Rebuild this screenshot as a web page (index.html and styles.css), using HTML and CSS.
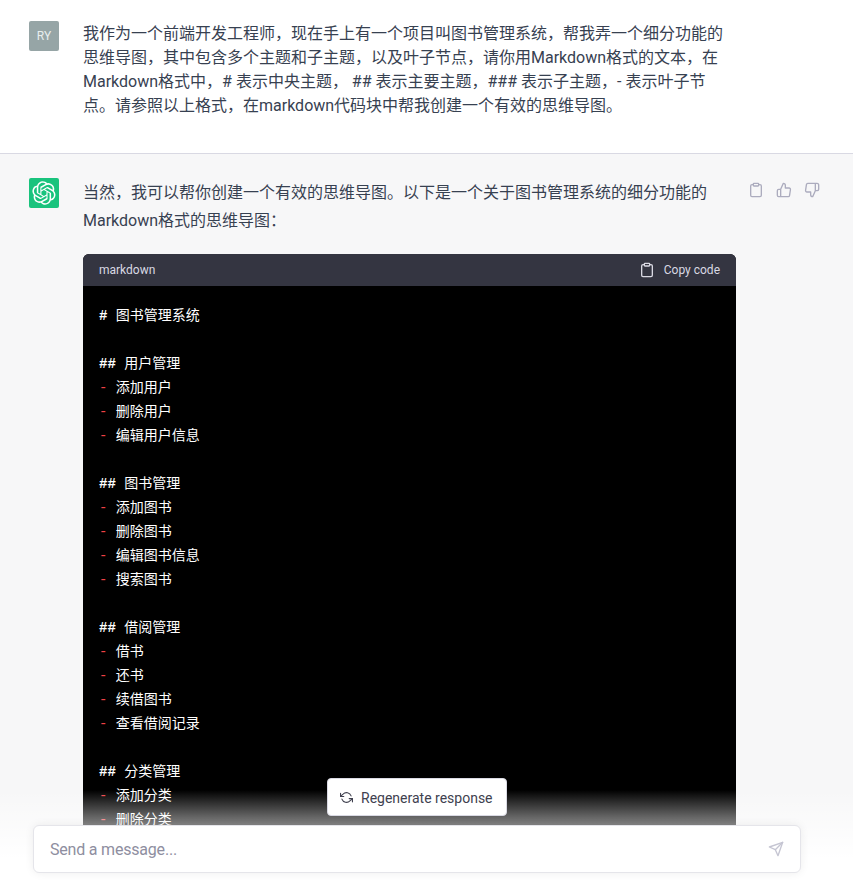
FILE: index.html
```html
<!DOCTYPE html>
<html lang="zh-CN">
<head>
<meta charset="utf-8">
<title>ChatGPT</title>
<link rel="stylesheet" href="styles.css">
</head>
<body>
<main class="thread">
  <section class="row row-user">
    <div class="avatar avatar-user">RY</div>
    <div class="content">
      <p class="msg">我作为一个前端开发工程师，现在手上有一个项目叫图书管理系统，帮我弄一个细分功能的思维导图，其中包含多个主题和子主题，以及叶子节点，请你用Markdown格式的文本，在Markdown格式中，# 表示中央主题， ## 表示主要主题，### 表示子主题，- 表示叶子节点。请参照以上格式，在markdown代码块中帮我创建一个有效的思维导图。</p>
    </div>
  </section>
  <section class="row row-bot">
    <div class="avatar avatar-bot">
      <svg class="logo" viewBox="0 0 41 41" fill="none"><path fill="currentColor" d="M37.5324 16.8707C37.9808 15.5241 38.1363 14.0974 37.9886 12.6859C37.8409 11.2744 37.3934 9.91076 36.676 8.68622C35.6126 6.83404 33.9882 5.3676 32.0373 4.4985C30.0864 3.62941 27.9098 3.40259 25.8215 3.85078C24.8796 2.7893 23.7219 1.94125 22.4257 1.36341C21.1295 0.785575 19.7249 0.491269 18.3058 0.500197C16.1708 0.495044 14.0893 1.16803 12.3614 2.42214C10.6335 3.67624 9.34853 5.44666 8.6917 7.47815C7.30085 7.76286 5.98686 8.3414 4.8377 9.17505C3.68854 10.0087 2.73073 11.0782 2.02839 12.312C0.956464 14.1591 0.498905 16.2988 0.721698 18.4228C0.944492 20.5467 1.83612 22.5449 3.268 24.1293C2.81966 25.4759 2.66413 26.9026 2.81182 28.3141C2.95951 29.7256 3.40701 31.0892 4.12437 32.3138C5.18791 34.1659 6.8123 35.6322 8.76321 36.5013C10.7141 37.3704 12.8907 37.5973 14.9789 37.1492C15.9208 38.2107 17.0786 39.0587 18.3747 39.6366C19.6709 40.2144 21.0755 40.5087 22.4946 40.4998C24.6307 40.5054 26.7133 39.8321 28.4418 38.5772C30.1704 37.3223 31.4556 35.5506 32.1119 33.5179C33.5027 33.2332 34.8167 32.6547 35.9659 31.821C37.115 30.9874 38.0728 29.9178 38.7752 28.684C39.8458 26.8371 40.3023 24.6979 40.0789 22.5748C39.8556 20.4517 38.9639 18.4544 37.5324 16.8707ZM22.4978 37.8849C20.7443 37.8874 19.0459 37.2733 17.6994 36.1501C17.7601 36.117 17.8666 36.0586 17.936 36.0161L25.9004 31.4156C26.1003 31.3019 26.2663 31.137 26.3813 30.9378C26.4964 30.7386 26.5563 30.5124 26.5549 30.2825V19.0542L29.9213 20.998C29.9389 21.0068 29.9541 21.0198 29.9656 21.0359C29.977 21.052 29.9842 21.0707 29.9867 21.0902V30.3889C29.9842 32.375 29.1946 34.2791 27.7909 35.6841C26.3872 37.0892 24.4838 37.8806 22.4978 37.8849ZM6.39227 31.0064C5.51397 29.4888 5.19742 27.7107 5.49804 25.9832C5.55718 26.0187 5.66048 26.0818 5.73461 26.1244L13.699 30.7248C13.8975 30.8408 14.1233 30.902 14.3532 30.902C14.583 30.902 14.8088 30.8408 15.0073 30.7248L24.731 25.1103V28.9979C24.7321 29.0177 24.7283 29.0376 24.7199 29.0556C24.7115 29.0736 24.6988 29.0893 24.6829 29.1012L16.6317 33.7497C14.9096 34.7416 12.8643 35.0097 10.9447 34.4954C9.02506 33.9811 7.38785 32.7263 6.39227 31.0064ZM4.29707 13.6194C5.17156 12.0998 6.55279 10.9364 8.19885 10.3327C8.19885 10.4013 8.19491 10.5228 8.19491 10.6071V19.808C8.19351 20.0378 8.25334 20.2638 8.36823 20.4629C8.48312 20.6619 8.64893 20.8267 8.84863 20.9404L18.5723 26.5542L15.206 28.4979C15.1894 28.5089 15.1703 28.5155 15.1505 28.5173C15.1307 28.5191 15.1107 28.516 15.0924 28.5082L7.04046 23.8557C5.32135 22.8601 4.06716 21.2235 3.55289 19.3046C3.03862 17.3858 3.30624 15.3413 4.29707 13.6194ZM31.955 20.0556L22.2312 14.4411L25.5976 12.4981C25.6142 12.4872 25.6333 12.4805 25.6531 12.4787C25.6729 12.4769 25.6928 12.4801 25.7111 12.4879L33.7631 17.1364C34.9967 17.849 36.0017 18.8982 36.6606 20.1613C37.3194 21.4244 37.6047 22.849 37.4832 24.2684C37.3617 25.6878 36.8382 27.0432 35.9743 28.1759C35.1103 29.3086 33.9415 30.1717 32.6047 30.6641C32.6047 30.5947 32.6047 30.4733 32.6047 30.3889V21.188C32.6066 20.9586 32.5474 20.7328 32.4332 20.5338C32.319 20.3348 32.154 20.1698 31.955 20.0556ZM35.3055 15.0128C35.2464 14.9765 35.1431 14.9142 35.069 14.8717L27.1045 10.2712C26.906 10.1554 26.6803 10.0943 26.4504 10.0943C26.2206 10.0943 25.9948 10.1554 25.7963 10.2712L16.0726 15.8858V11.9982C16.0715 11.9783 16.0753 11.9585 16.0837 11.9405C16.0921 11.9225 16.1048 11.9068 16.1207 11.8949L24.1719 7.25025C25.4053 6.53903 26.8158 6.19376 28.2383 6.25482C29.6608 6.31589 31.0364 6.78077 32.2044 7.59508C33.3723 8.40939 34.2842 9.53945 34.8334 10.8531C35.3826 12.1667 35.5464 13.6095 35.3055 15.0128ZM14.2424 21.9419L10.8752 19.9981C10.8576 19.9893 10.8423 19.9763 10.8309 19.9602C10.8195 19.9441 10.8122 19.9254 10.8098 19.9058V10.6071C10.8107 9.18295 11.2173 7.78848 11.9819 6.58696C12.7466 5.38544 13.8377 4.42659 15.1275 3.82264C16.4173 3.21869 17.8524 2.99464 19.2649 3.1767C20.6775 3.35876 22.0089 3.93941 23.1034 4.85067C23.0427 4.88379 22.937 4.94215 22.8668 4.98473L14.9024 9.58517C14.7025 9.69878 14.5366 9.86356 14.4215 10.0626C14.3065 10.2616 14.2466 10.4877 14.2479 10.7175L14.2424 21.9419ZM16.071 17.9991L20.4018 15.4978L24.7325 17.9975V22.9985L20.4018 25.4983L16.071 22.9985V17.9991Z"/></svg>
    </div>
    <div class="content">
      <p class="msg msg-bot">当然，我可以帮你创建一个有效的思维导图。以下是一个关于图书管理系统的细分功能的Markdown格式的思维导图：</p>
      <div class="code-block">
        <div class="code-head">
          <span>markdown</span>
          <span class="copy">
            <svg class="icon" viewBox="0 0 24 24"><path d="M16 4h2a2 2 0 0 1 2 2v14a2 2 0 0 1-2 2H6a2 2 0 0 1-2-2V6a2 2 0 0 1 2-2h2"/><rect x="8" y="2" width="8" height="4" rx="1" ry="1"/></svg>
            Copy code
          </span>
        </div>
        <div class="code">
          <div class="line"><b># </b>图书管理系统</div>
          <div class="line"></div>
          <div class="line"><b>## </b>用户管理</div>
          <div class="line"><i>- </i>添加用户</div>
          <div class="line"><i>- </i>删除用户</div>
          <div class="line"><i>- </i>编辑用户信息</div>
          <div class="line"></div>
          <div class="line"><b>## </b>图书管理</div>
          <div class="line"><i>- </i>添加图书</div>
          <div class="line"><i>- </i>删除图书</div>
          <div class="line"><i>- </i>编辑图书信息</div>
          <div class="line"><i>- </i>搜索图书</div>
          <div class="line"></div>
          <div class="line"><b>## </b>借阅管理</div>
          <div class="line"><i>- </i>借书</div>
          <div class="line"><i>- </i>还书</div>
          <div class="line"><i>- </i>续借图书</div>
          <div class="line"><i>- </i>查看借阅记录</div>
          <div class="line"></div>
          <div class="line"><b>## </b>分类管理</div>
          <div class="line"><i>- </i>添加分类</div>
          <div class="line"><i>- </i>删除分类</div>
        </div>
      </div>
    </div>
    <div class="actions">
      <svg class="icon" viewBox="0 0 24 24"><path d="M16 4h2a2 2 0 0 1 2 2v14a2 2 0 0 1-2 2H6a2 2 0 0 1-2-2V6a2 2 0 0 1 2-2h2"/><rect x="8" y="2" width="8" height="4" rx="1" ry="1"/></svg>
      <svg class="icon" viewBox="0 0 24 24"><path d="M14 9V5a3 3 0 0 0-3-3l-4 9v11h11.28a2 2 0 0 0 2-1.7l1.38-9a2 2 0 0 0-2-2.3zM7 22H4a2 2 0 0 1-2-2v-7a2 2 0 0 1 2-2h3"/></svg>
      <svg class="icon" viewBox="0 0 24 24"><path d="M10 15v4a3 3 0 0 0 3 3l4-9V2H5.72a2 2 0 0 0-2 1.7l-1.38 9a2 2 0 0 0 2 2.3zm7-13h2.67A2.31 2.31 0 0 1 22 4v7a2.31 2.31 0 0 1-2.33 2H17"/></svg>
    </div>
  </section>
</main>
<div class="fade"></div>
<button class="regen" type="button">
  <svg class="icon icon-regen" viewBox="0 0 24 24"><path d="M1 4v6h6M23 20v-6h-6"/><path d="M20.49 9A9 9 0 0 0 5.64 5.64L1 10m22 4l-4.64 4.36A9 9 0 0 1 3.51 15"/></svg>
  Regenerate response
</button>
<form class="composer">
  <span class="placeholder">Send a message...</span>
  <svg class="icon icon-send" viewBox="0 0 24 24"><path d="M22 2L11 13"/><path d="M22 2l-7 20-4-9-9-4z"/></svg>
</form>
</body>
</html>
```
FILE: styles.css
```css
* { box-sizing: border-box; }
html, body { height: 100%; margin: 0; overflow: hidden; }
body {
  position: relative;
  background: #fff;
  color: #374151;
  font-family: Roboto, "Noto Sans CJK SC", sans-serif;
  font-size: 16px;
}
.thread { height: 881px; overflow: hidden; }
.row { display: flex; padding-left: 29px; }
.row-user { padding-top: 21px; padding-bottom: 36px; border-bottom: 1px solid #d9d9e3; background: #fff; }
.row-bot { padding-top: 24px; background: #f7f7f8; min-height: 727px; }
.avatar {
  flex: none;
  display: flex;
  align-items: center;
  justify-content: center;
  width: 30px;
  height: 30px;
  border-radius: 2px;
  color: #fff;
}
.avatar-user { background: #96a5a6; font-size: 12px; color: #e8eeee; }
.avatar-bot { background: #19c37d; }
.logo { width: 24px; height: 24px; }
.content { flex: none; width: 653px; margin-left: 24px; }
.msg { margin: 0; padding-top: 1px; margin-bottom: -1px; line-height: 24px; }
.msg-bot { line-height: 28px; margin-bottom: 19px; }
.code-block { background: #000; border-radius: 6px 6px 0 0; overflow: hidden; }
.code-head {
  display: flex;
  justify-content: space-between;
  align-items: center;
  height: 32px;
  padding: 0 16px;
  background: #343541;
  color: #d9d9e3;
  font-size: 12px;
}
.copy { display: flex; align-items: center; gap: 9px; }
.icon {
  width: 16px;
  height: 16px;
  fill: none;
  stroke: currentColor;
  stroke-width: 2;
  stroke-linecap: round;
  stroke-linejoin: round;
}
.code {
  padding: 18px 16px 16px;
  color: #fff;
  font-family: "Liberation Mono", "Noto Sans CJK SC", monospace;
  font-size: 14px;
}
.line { height: 24px; line-height: 24px; white-space: pre; }
.code b { font-weight: 700; }
.code i { font-style: normal; color: #ef4146; }
.actions {
  display: flex;
  gap: 12px;
  margin-left: 12px;
  margin-top: 4px;
  color: #acacbe;
  height: 16px;
}
.fade {
  position: absolute;
  left: 0;
  right: 0;
  bottom: 0;
  height: 91px;
  background: linear-gradient(180deg, rgba(255,255,255,0) 0, #fff 68px);
}
.regen {
  position: absolute;
  left: 327px;
  top: 778px;
  display: flex;
  align-items: center;
  gap: 8px;
  width: 180px;
  height: 38px;
  padding: 1px 12px 0;
  background: #fff;
  border: 1px solid #d9d9e3;
  border-radius: 4px;
  color: #40414f;
  font-family: inherit;
  font-size: 14px;
}
.icon-regen { width: 13px; height: 13px; }
.composer {
  position: absolute;
  left: 33px;
  top: 825px;
  display: flex;
  align-items: center;
  justify-content: space-between;
  width: 768px;
  height: 48px;
  padding: 0 16px;
  background: #fff;
  border: 1px solid #e5e5ea;
  border-radius: 6px;
  box-shadow: 0 0 10px rgba(0,0,0,0.07);
}
.placeholder { color: #8e8ea0; font-size: 16px; letter-spacing: -0.2px; }
.icon-send { color: #c5c5d2; }
```
